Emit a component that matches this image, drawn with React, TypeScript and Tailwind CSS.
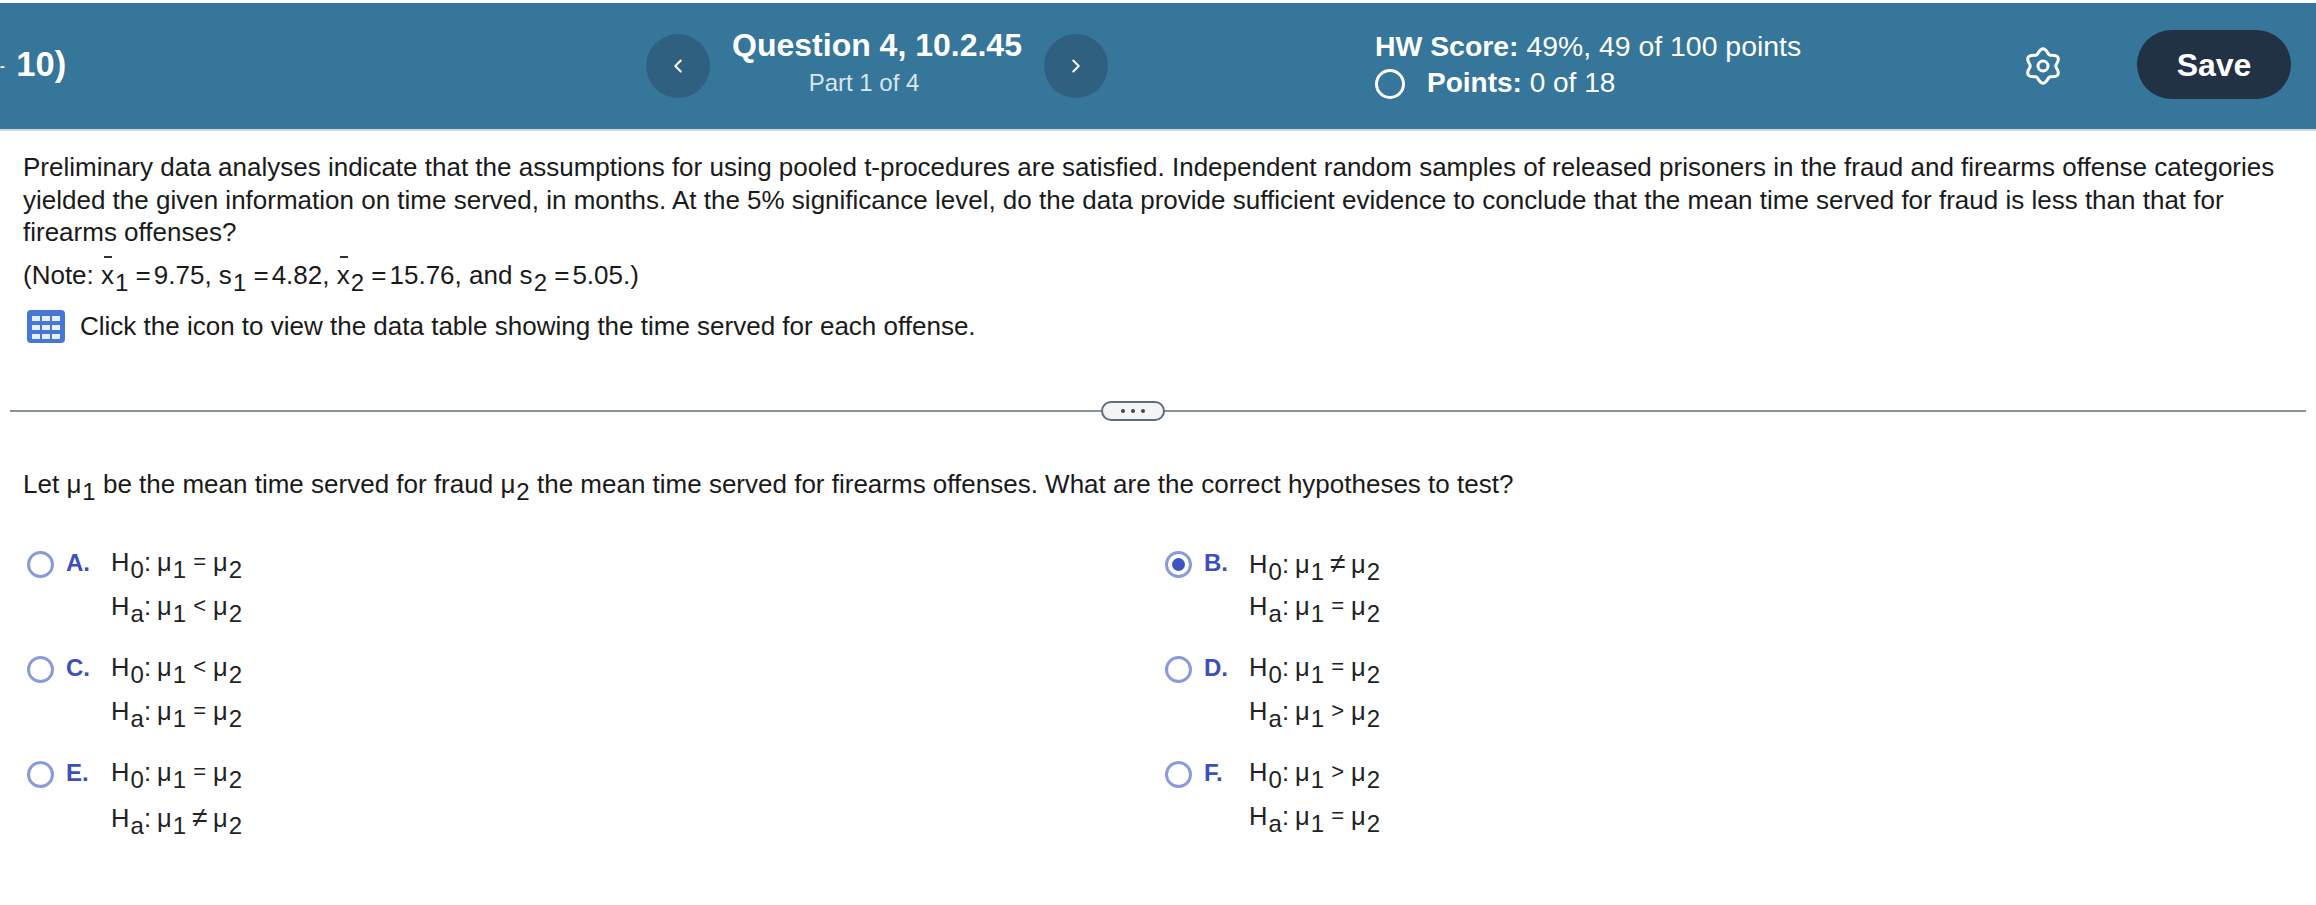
import { ChevronLeft, ChevronRight } from "lucide-react";
import type { ReactNode } from "react";

function Sub({ children }: { children: ReactNode }) {
  return <sub className="relative top-[7px] align-baseline text-[24px] leading-none ml-[1px]">{children}</sub>;
}

function Xbar({ n }: { n: string }) {
  return (
    <span className="relative">
      <span className="absolute left-[3px] top-[-4px] h-[2px] w-[8px] bg-[#333]" />x<Sub>{n}</Sub>
    </span>
  );
}

function Mu({ n }: { n: string }) {
  return (
    <span>
      μ<Sub>{n}</Sub>
    </span>
  );
}

function Hyp({ head, sign }: { head: string; sign: string }) {
  return (
    <div className="flex items-baseline h-[44px]">
      <span className="w-[33px] whitespace-nowrap">
        H<Sub>{head}</Sub>
      </span>
      <span className="w-[13px]">:</span>
      <Mu n="1" />
      <span className={sign === "≠" ? "w-[27px] text-center text-[28px]" : "w-[27px] text-center text-[22px] relative top-[-2px]"}>{sign}</span>
      <Mu n="2" />
    </div>
  );
}

const options = [
  { key: "A.", h0: "=", ha: "<", picked: false },
  { key: "B.", h0: "≠", ha: "=", picked: true },
  { key: "C.", h0: "<", ha: "=", picked: false },
  { key: "D.", h0: "=", ha: ">", picked: false },
  { key: "E.", h0: "=", ha: "≠", picked: false },
  { key: "F.", h0: ">", ha: "=", picked: false },
];

function Option({ opt }: { opt: (typeof options)[number] }) {
  return (
    <div className="flex items-start h-[105px]">
      <span className="mt-[4px] flex h-[27px] w-[27px] items-center justify-center rounded-full border-[3px] border-[#8a9bdc]">
        {opt.picked && <span className="h-[13px] w-[13px] rounded-full bg-[#3f55c4]" />}
      </span>
      <span className="ml-[12px] mt-[1px] w-[45px] font-bold text-[#3b4fbf] text-[24px] leading-[30px]">{opt.key}</span>
      <div className="text-[25.5px] text-[#222] mt-[-4px]">
        <Hyp head="0" sign={opt.h0} />
        <Hyp head="a" sign={opt.ha} />
      </div>
    </div>
  );
}

// six soft lobes, top and bottom ones on the vertical axis
const gearPath =
  Array.from({ length: 120 }, (_, i) => {
    const t = (i / 120) * Math.PI * 2;
    const r = 9 + 1.3 * Math.cos(6 * t);
    const x = 12 + r * Math.sin(t);
    const y = 12 - r * Math.cos(t);
    return `${i === 0 ? "M" : "L"}${x.toFixed(2)} ${y.toFixed(2)}`;
  }).join(" ") + "Z";

export default function App() {
  return (
    <div className="min-h-[905px] bg-white pt-[3px] text-[#1a1a1a] font-['Liberation_Sans',Arial,sans-serif] overflow-hidden">
      <header className="flex h-[126px] items-center bg-[#36769a] text-white">
        <div className="w-[646px] shrink-0 mt-[-2px] text-[34.5px] font-bold whitespace-nowrap">
          <span className="text-[14px] align-middle">-</span> <span className="ml-[2px]">10)</span>
        </div>
        <button className="flex h-[64px] w-[64px] shrink-0 items-center justify-center rounded-full bg-[#2f607f]">
          <ChevronLeft size={22} strokeWidth={2.2} />
        </button>
        <div className="w-[334px] shrink-0 text-center mt-[-10px]">
          <div className="text-[32px] font-bold leading-[40px]">Question 4, 10.2.45</div>
          <div className="mt-[3px] pr-[26px] text-[24px] leading-[30px] text-[#dbe6ee]">Part 1 of 4</div>
        </div>
        <button className="flex h-[64px] w-[64px] shrink-0 items-center justify-center rounded-full bg-[#2f607f]">
          <ChevronRight size={22} strokeWidth={2.2} />
        </button>
        <div className="ml-[267px] mt-[-4px] w-[620px] shrink-0 text-[28.4px]">
          <div className="leading-[36px]">
            <b>HW Score:</b> 49%, 49 of 100 points
          </div>
          <div className="mt-[1px] flex items-center text-[28px] leading-[36px]">
            <span className="mt-[3px] mr-[22px] h-[30px] w-[30px] rounded-full border-[3px] border-white" />
            <b>Points:</b>&nbsp;0 of 18
          </div>
        </div>
        <svg viewBox="0 0 24 24" width="40" height="40" fill="none" stroke="white" strokeWidth="1.8" strokeLinejoin="round" className="ml-[28px] shrink-0">
          <path d={gearPath} />
          <circle cx="12" cy="12" r="3" />
        </svg>
        <button className="ml-[74px] mt-[-3px] h-[69px] w-[154px] shrink-0 rounded-full bg-[#213245] text-[32px] font-bold">Save</button>
      </header>
      <div className="h-[2px] bg-[#cfd8e2]" />

      <main className="px-[23px] pt-[20px] text-[26px] leading-[32.5px]">
        <p className="w-[2280px]">
          Preliminary data analyses indicate that the assumptions for using pooled t-procedures are satisfied. Independent random samples of released prisoners in the fraud and firearms offense categories yielded the given information on time served, in months. At the 5% significance level, do the data provide sufficient evidence to conclude that the mean time served for fraud is less than that for firearms offenses?
        </p>
        <p className="mt-[10px] h-[36px] whitespace-nowrap">
          (Note: <Xbar n="1" /> =<span className="ml-[3px]">9.75,</span> s<Sub>1</Sub> =<span className="ml-[3px]">4.82,</span> <Xbar n="2" /> =<span className="ml-[3px]">15.76,</span> and s<Sub>2</Sub> =<span className="ml-[3px]">5.05.)</span>
        </p>
        <div className="mt-[15px] flex items-center">
          <svg viewBox="0 0 38 33" width="38" height="33" className="ml-[4px] mr-[15px] shrink-0">
            <rect width="38" height="33" rx="4" fill="#4677d6" />
            {[6, 15, 24].map((y) =>
              [5, 15, 25].map((x) => <rect key={`${x}-${y}`} x={x} y={y} width="8" height="5" fill="#e6eefb" />)
            )}
          </svg>
          <span>Click the icon to view the data table showing the time served for each offense.</span>
        </div>
      </main>

      <div className="relative mx-[10px] mt-[58px] flex h-[20px] items-center">
        <div className="h-[2px] w-full bg-[#87929f]" />
        <div className="absolute left-[1091px] top-0 flex h-[20px] w-[64px] items-center justify-center gap-[6px] rounded-full border-[2px] border-[#5d6b7a] bg-[#f3f4f6]">
          <span className="h-[4px] w-[4px] rounded-full bg-[#444]" />
          <span className="h-[4px] w-[4px] rounded-full bg-[#444]" />
          <span className="h-[4px] w-[4px] rounded-full bg-[#444]" />
        </div>
      </div>

      <section className="px-[23px] pt-[45px] text-[26px]">
        <p className="whitespace-nowrap leading-[36px]">
          Let <Mu n="1" /> be the mean time served for fraud <Mu n="2" /> the mean time served for firearms offenses. What are the correct hypotheses to test?
        </p>
        <div className="mt-[45px] grid grid-cols-[1138px_1fr] pl-[4px]">
          {options.map((opt) => (
            <Option key={opt.key} opt={opt} />
          ))}
        </div>
      </section>
    </div>
  );
}
